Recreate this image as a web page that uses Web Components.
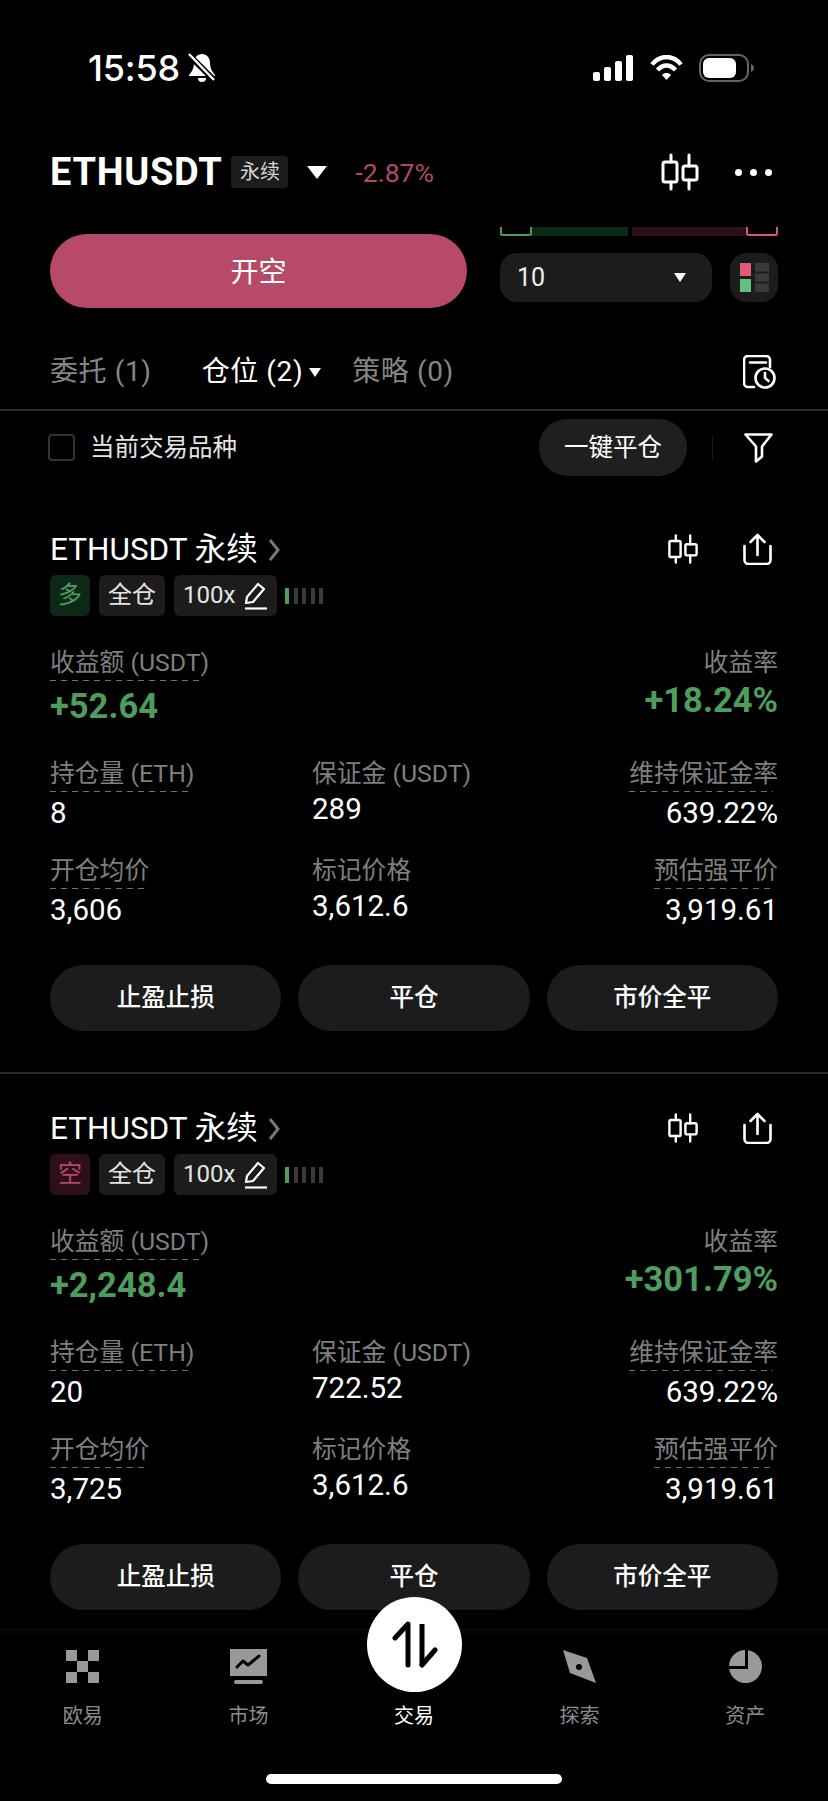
<!DOCTYPE html>
<html lang="zh">
<head>
<meta charset="utf-8">
<title>ETHUSDT</title>
<style>
  html, body { margin: 0; background: #000; }
  body {
    width: 828px;
    height: 1801px;
    overflow: hidden;
    display: flex;
    flex-direction: column;
    color: #fff;
    font-family: Roboto, "Noto Sans CJK SC", sans-serif;
  }
  .content { flex: 1; min-height: 0; overflow: hidden; }
</style>
</head>
<body>
  <status-bar></status-bar>
  <pair-header></pair-header>
  <order-strip></order-strip>
  <position-tabs></position-tabs>
  <filter-row></filter-row>
  <div class="content">
    <position-card side="long" pnl="+52.64" rate="+18.24%" size="8" margin="289" entry="3,606"></position-card>
    <position-card side="short" pnl="+2,248.4" rate="+301.79%" size="20" margin="722.52" entry="3,725"></position-card>
  </div>
  <tab-bar></tab-bar>

<script>
const candleIcon = (w, h) => `
  <svg width="${w}" height="${h}" viewBox="0 0 40 38" fill="none" stroke="currentColor" stroke-width="3" stroke-linecap="round" stroke-linejoin="round">
    <path d="M11 2v7M11 29v7M29 2v11M29 27v9"/>
    <rect x="3" y="9" width="14" height="20" rx="2"/>
    <rect x="23" y="13" width="14" height="14" rx="2"/>
  </svg>`;

const templateStatus = document.createElement("template");
templateStatus.innerHTML = `
  <style>
    :host { display: flex; height: 136px; box-sizing: border-box; padding: 0 73px 0 88px; align-items: center; justify-content: space-between; }
    .left, .right { display: flex; align-items: center; }
    .time { font: 500 36px/40px Inter, sans-serif; letter-spacing: -0.2px; }
    .left svg { margin-left: 8px; }
    .right svg + svg { margin-left: 17px; }
  </style>
  <div class="left">
    <span class="time">15:58</span>
    <svg width="28" height="30" viewBox="0 0 28 30">
      <path d="M14 1c5 0 8 4 8 9 0 5 2 9 5 12v1H1v-1c3-3 5-7 5-12 0-5 3-9 8-9z" fill="#fff"/>
      <path d="M10 25h8a4 4 0 0 1-8 0z" fill="#fff"/>
      <path d="M2 3l25 25" stroke="#000" stroke-width="6"/>
      <path d="M1 1l25 26" stroke="#fff" stroke-width="2.4"/>
    </svg>
  </div>
  <div class="right">
    <svg width="40" height="26" viewBox="0 0 40 26" fill="#fff">
      <rect x="0" y="17" width="7" height="9" rx="2"/>
      <rect x="11" y="12" width="7" height="14" rx="2"/>
      <rect x="22" y="6" width="7" height="20" rx="2"/>
      <rect x="33" y="0" width="7" height="26" rx="2"/>
    </svg>
    <svg width="33" height="26" viewBox="0 0 33 26" fill="none" stroke="#fff" stroke-width="4.4">
      <path d="M2 9.5C10-.5 23-.5 31 9.5"/>
      <path d="M7.5 15c5.500-6 12.500-6 18 0"/>
      <path d="M12 20c2.500-2.600 6.500-2.600 9 0l-4.500 5z" fill="#fff" stroke="none"/>
    </svg>
    <svg width="56" height="28" viewBox="0 0 56 28" fill="none" style="margin-left:16px">
      <rect x="1" y="1" width="48" height="26" rx="9" stroke="#666" stroke-width="2"/>
      <rect x="4" y="4" width="33" height="20" rx="6" fill="#fff"/>
      <path d="M52 10c2 1 3 2 3 4s-1 3-3 4z" fill="#666"/>
    </svg>
  </div>`;
class StatusBar extends HTMLElement {
  constructor() {
    super();
    this.attachShadow({ mode: "open" });
    this.shadowRoot.appendChild(templateStatus.content.cloneNode(true));
  }
}
customElements.define("status-bar", StatusBar);

const templateHeader = document.createElement("template");
templateHeader.innerHTML = `
  <style>
    :host { display: flex; align-items: center; height: 72px; margin-bottom: 17px; padding: 0 56px 0 50px; }
    .name { font-size: 38px; line-height: 46px; font-weight: 700; letter-spacing: 0.7px; }
    .tag { margin-left: 9px; width: 57px; height: 32px; background: #1c1c1c; border-radius: 4px; font-size: 20px; line-height: 32px; text-align: center; color: #d5d5d5; }
    .arrow { margin-left: 19px; width: 0; height: 0; border-left: 10px solid transparent; border-right: 10px solid transparent; border-top: 13px solid #fff; }
    .change { margin-left: 28px; font-size: 26.5px; color: #b04a66; }
    .icons { margin-left: auto; display: flex; align-items: center; color: #fff; }
    .dots { margin-left: 35px; display: flex; gap: 8px; }
    .dots i { width: 7px; height: 7px; border-radius: 50%; background: #fff; }
  </style>
  <span class="name">ETHUSDT</span>
  <span class="tag">永续</span>
  <span class="arrow"></span>
  <span class="change">-2.87%</span>
  <div class="icons">
    ${candleIcon(40, 38)}
    <div class="dots"><i></i><i></i><i></i></div>
  </div>`;
class PairHeader extends HTMLElement {
  constructor() {
    super();
    this.attachShadow({ mode: "open" });
    this.shadowRoot.appendChild(templateHeader.content.cloneNode(true));
  }
}
customElements.define("pair-header", PairHeader);

const templateStrip = document.createElement("template");
templateStrip.innerHTML = `
  <style>
    :host { display: grid; grid-template-columns: 417px 278px; column-gap: 33px; padding: 0 50px; }
    .sell { margin-top: 9px; height: 74px; border-radius: 37px; background: #b64a68; font-size: 28px; line-height: 77px; text-align: center; }
    .book { margin-top: 2px; display: flex; gap: 4px; height: 9px; overflow: hidden; }
    .book div { height: 9px; box-sizing: border-box; position: relative; }
    .buy-depth { width: 128px; background: #0d2a18; }
    .sell-depth { flex: 1; background: #2c0f18; }
    .box { position: absolute; top: -10px; width: 32px; height: 19px; box-sizing: border-box; border-radius: 3px; background: #000; }
    .buy-depth .box { left: 0; border: 2px solid #4c9d5e; }
    .sell-depth .box { right: 0; border: 2px solid #d8587c; }
    .controls { margin-top: 17px; display: flex; justify-content: space-between; }
    .select { width: 212px; height: 49px; box-sizing: border-box; padding: 0 26px 0 17px; background: #1c1c1c; border-radius: 17px; display: flex; align-items: center; justify-content: space-between; font-size: 25px; color: #eee; }
    .select i { width: 0; height: 0; border-left: 6.5px solid transparent; border-right: 6.5px solid transparent; border-top: 9px solid #fff; }
    .mode { width: 48px; height: 49px; background: #1c1c1c; border-radius: 16px; display: grid; place-items: center; }
  </style>
  <div class="sell">开空</div>
  <div>
    <div class="book">
      <div class="buy-depth"><span class="box"></span></div>
      <div class="sell-depth"><span class="box"></span></div>
    </div>
    <div class="controls">
      <div class="select"><span>10</span><i></i></div>
      <div class="mode">
        <svg width="29" height="29" viewBox="0 0 29 29">
          <rect x="0" y="0" width="11" height="13" fill="#e05a78"/>
          <rect x="0" y="16" width="11" height="13" fill="#63c07a"/>
          <rect x="15" y="0" width="14" height="8.500" fill="#3a3a3a"/>
          <rect x="15" y="10.500" width="14" height="8" fill="#3a3a3a"/>
          <rect x="15" y="20.500" width="14" height="8.500" fill="#3a3a3a"/>
        </svg>
      </div>
    </div>
  </div>`;
class OrderStrip extends HTMLElement {
  constructor() {
    super();
    this.attachShadow({ mode: "open" });
    this.shadowRoot.appendChild(templateStrip.content.cloneNode(true));
  }
}
customElements.define("order-strip", OrderStrip);

const templateTabs = document.createElement("template");
templateTabs.innerHTML = `
  <style>
    :host { display: flex; align-items: center; height: 48px; padding: 40px 52px 13px 50px; border-bottom: 2px solid #2d2d2d; font-size: 28px; line-height: 48px; color: #858585; letter-spacing: 0.6px; }
    .on { color: #fff; margin-left: 50px; }
    .arrow { margin-left: 6px; width: 0; height: 0; border-left: 6.500px solid transparent; border-right: 6.500px solid transparent; border-top: 9px solid #fff; }
    .last { margin-left: 31px; }
    svg { margin-left: auto; }
  </style>
  <span>委托 (1)</span>
  <span class="on">仓位 (2)</span>
  <span class="arrow"></span>
  <span class="last">策略 (0)</span>
  <svg width="33" height="34" viewBox="0 0 33 34" fill="none" stroke="#fff" stroke-width="2.600" stroke-linecap="round">
    <path d="M11 32H5a4 4 0 0 1-4-4V5a4 4 0 0 1 4-4h18a4 4 0 0 1 4 4v7"/>
    <path d="M7 7.500h16"/>
    <circle cx="22" cy="23" r="9.500"/>
    <path d="M22 18v5l3.500 3"/>
  </svg>`;
class PositionTabs extends HTMLElement {
  constructor() {
    super();
    this.attachShadow({ mode: "open" });
    this.shadowRoot.appendChild(templateTabs.content.cloneNode(true));
  }
}
customElements.define("position-tabs", PositionTabs);

const templateFilter = document.createElement("template");
templateFilter.innerHTML = `
  <style>
    :host { display: flex; align-items: center; height: 57px; padding: 8px 55px 19px 48px; font-size: 24.5px; color: #e5e5e5; }
    .check { width: 27px; height: 27px; box-sizing: border-box; border: 2px solid #333; border-radius: 4px; margin-right: 15px; }
    .text { padding-bottom: 4px; }
    .close { margin-left: auto; width: 148px; height: 57px; border-radius: 28px; background: #1f1f1f; color: #fff; text-align: center; line-height: 57px; font-size: 24.5px; }
    .sep { width: 1px; height: 24px; background: #1a1a1a; margin: 0 31px 0 25px; }
  </style>
  <span class="check"></span>
  <span class="text">当前交易品种</span>
  <span class="close">一键平仓</span>
  <span class="sep"></span>
  <svg width="29" height="30" viewBox="0 0 29 30" fill="none" stroke="#fff" stroke-width="2.600" stroke-linejoin="round">
    <path d="M1.500 1.500h26l-9.500 12v10l-6 5v-15z"/>
  </svg>`;
class FilterRow extends HTMLElement {
  constructor() {
    super();
    this.attachShadow({ mode: "open" });
    this.shadowRoot.appendChild(templateFilter.content.cloneNode(true));
  }
}
customElements.define("filter-row", FilterRow);

const templateStat = document.createElement("template");
templateStat.innerHTML = `
  <style>
    :host { display: flex; flex-direction: column; align-items: flex-start; }
    :host([end]) { align-items: flex-end; }
    .label { font-size: 24.8px; line-height: 30px; color: #7f7f7f; white-space: nowrap; }
    :host([tip]) .label {
      padding-bottom: 3px;
      background: repeating-linear-gradient(90deg, #707070 0 6px, transparent 6px 11px) left bottom / calc(100% - 5px) 1px no-repeat;
    }
    .value { margin-top: 2px; font-size: 29.5px; line-height: 36px; font-weight: 400; color: #fff; white-space: nowrap; }
    :host([tip]) .value { margin-top: 3px; }
    :host([big]) .value { margin-top: 2px; font-size: 34.5px; line-height: 40px; font-weight: 700; color: #4c9d5e; }
    :host([big][tip]) .value { margin-top: 5px; }
  </style>
  <span class="label"><slot name="label"></slot></span>
  <span class="value"><slot></slot></span>`;
class StatCell extends HTMLElement {
  constructor() {
    super();
    this.attachShadow({ mode: "open" });
    this.shadowRoot.appendChild(templateStat.content.cloneNode(true));
  }
}
customElements.define("stat-cell", StatCell);

const templatePill = document.createElement("template");
templatePill.innerHTML = `
  <style>
    :host { display: block; height: 66px; border-radius: 33px; background: #1c1c1c; font-size: 24.5px; font-weight: 500; line-height: 66px; text-align: center; color: #fff; }
  </style>
  <slot></slot>`;
class PillButton extends HTMLElement {
  constructor() {
    super();
    this.attachShadow({ mode: "open" });
    this.shadowRoot.appendChild(templatePill.content.cloneNode(true));
  }
}
customElements.define("pill-button", PillButton);

const templateCard = document.createElement("template");
templateCard.innerHTML = `
  <style>
    :host { display: block; padding: 33px 50px 41px; border-bottom: 2px solid #2a2a2a; }
    :host(:last-child) { border-bottom: 0; }
    .title { display: flex; align-items: center; height: 40px; }
    .name { font-size: 31.5px; line-height: 40px; font-weight: 400; padding-top: 4px; }
    .chev { margin: 4px 0 0 10px; }
    .tools { margin-left: auto; display: flex; align-items: center; gap: 44px; padding: 2px 6px 0 0; color: #fff; }
    .tags { margin-top: 7px; display: flex; align-items: center; gap: 9px; height: 41px; }
    .tag { height: 41px; box-sizing: border-box; border-radius: 6px; background: #1c1c1c; font-size: 24px; line-height: 41px; padding: 0 9px; color: #e5e5e5; display: flex; align-items: center; gap: 9px; }
    .side { padding: 0 8px; }
    .long { background: #0e2817; color: #4c9d5e; }
    .short { background: #2e0f19; color: #b04a66; }
    .bars { display: flex; gap: 4.500px; margin-left: -1px; }
    .bars i { width: 4px; height: 16px; background: #3a3a3a; }
    .bars i:first-child { background: #4c9d5e; }
    .stats { margin-top: 32px; display: flex; justify-content: space-between; }
    .rows { display: grid; grid-template-columns: 262px 1fr auto; row-gap: 25px; margin-top: 33px; }
    .actions { margin-top: 37px; display: grid; grid-template-columns: repeat(3, 1fr); gap: 17px; }
  </style>
  <div class="title">
    <span class="name">ETHUSDT 永续</span>
    <svg class="chev" width="12" height="22" viewBox="0 0 12 22" fill="none" stroke="#777" stroke-width="3"><path d="M2 1l8 10-8 10"/></svg>
    <div class="tools">
      ${candleIcon(32, 32)}
      <svg width="29" height="32" viewBox="0 0 29 32" fill="none" stroke="currentColor" stroke-width="2.600" stroke-linecap="round" stroke-linejoin="round">
        <path d="M1.500 13v14a4 4 0 0 0 4 4h18a4 4 0 0 0 4-4V13"/>
        <path d="M14.500 22V2M7.500 9l7-7 7 7"/>
      </svg>
    </div>
  </div>
  <div class="tags">
    <span class="tag side"></span>
    <span class="tag">全仓</span>
    <span class="tag">100x
      <svg width="24" height="28" viewBox="0 0 24 28" fill="none" stroke="#fff" stroke-width="2.200" stroke-linejoin="round">
        <path d="M2 21l1-6L14 2l6 5L9 20z"/><path d="M1 26.500h22"/>
      </svg>
    </span>
    <span class="bars"><i></i><i></i><i></i><i></i><i></i></span>
  </div>
  <div class="stats">
    <stat-cell big tip class="pnl"><span slot="label">收益额 (USDT)</span></stat-cell>
    <stat-cell big end class="rate"><span slot="label">收益率</span></stat-cell>
  </div>
  <div class="rows">
    <stat-cell tip class="size"><span slot="label">持仓量 (ETH)</span></stat-cell>
    <stat-cell class="margin"><span slot="label">保证金 (USDT)</span></stat-cell>
    <stat-cell tip end><span slot="label">维持保证金率</span>639.22%</stat-cell>
    <stat-cell tip class="entry"><span slot="label">开仓均价</span></stat-cell>
    <stat-cell><span slot="label">标记价格</span>3,612.6</stat-cell>
    <stat-cell tip end><span slot="label">预估强平价</span>3,919.61</stat-cell>
  </div>
  <div class="actions">
    <pill-button>止盈止损</pill-button>
    <pill-button>平仓</pill-button>
    <pill-button>市价全平</pill-button>
  </div>`;
class PositionCard extends HTMLElement {
  constructor() {
    super();
    this.attachShadow({ mode: "open" });
    this.shadowRoot.appendChild(templateCard.content.cloneNode(true));
  }
  connectedCallback() {
    const root = this.shadowRoot;
    const side = root.querySelector(".side");
    const isLong = this.getAttribute("side") === "long";
    side.textContent = isLong ? "多" : "空";
    side.classList.add(isLong ? "long" : "short");
    for (const key of ["pnl", "rate", "size", "margin", "entry"]) {
      root.querySelector("." + key).append(this.getAttribute(key));
    }
  }
}
customElements.define("position-card", PositionCard);

const templateNav = document.createElement("template");
templateNav.innerHTML = `
  <style>
    :host { display: flex; flex-direction: column; align-items: center; color: #8c8c8c; }
    :host([active]) { color: #fff; }
    .icon { height: 37px; display: flex; align-items: center; justify-content: center; }
    .label { margin-top: 17px; font-size: 20px; line-height: 28px; }
  </style>
  <div class="icon"><slot name="icon"></slot></div>
  <div class="label"><slot></slot></div>`;
class NavItem extends HTMLElement {
  constructor() {
    super();
    this.attachShadow({ mode: "open" });
    this.shadowRoot.appendChild(templateNav.content.cloneNode(true));
  }
}
customElements.define("nav-item", NavItem);

const templateTabBar = document.createElement("template");
templateTabBar.innerHTML = `
  <style>
    :host { display: block; position: relative; height: 173px; box-sizing: border-box; padding-top: 20px; background: linear-gradient(#0a0a0d, #000 8px); }
    .items { display: grid; grid-template-columns: repeat(5, 1fr); }
    .trade { position: absolute; left: 367px; top: -31px; width: 95px; height: 95px; border-radius: 50%; background: #fff; display: grid; place-items: center; }
    .home { margin: 44px auto 0; width: 296px; height: 10px; border-radius: 5px; background: #fff; }
  </style>
  <div class="items">
    <nav-item>
      <svg slot="icon" width="33" height="33" viewBox="0 0 33 33" fill="#999">
        <rect width="11" height="11"/><rect x="22" width="11" height="11"/>
        <rect x="11" y="11" width="11" height="11"/>
        <rect y="22" width="11" height="11"/><rect x="22" y="22" width="11" height="11"/>
      </svg>
      欧易
    </nav-item>
    <nav-item>
      <svg slot="icon" width="37" height="35" viewBox="0 0 37 35">
        <rect width="37" height="27" fill="#999"/>
        <rect x="4" y="31" width="29" height="4" rx="2" fill="#999"/>
        <path d="M7 18l6-6 5 4 11-9" fill="none" stroke="#000" stroke-width="3" stroke-linecap="round" stroke-linejoin="round"/>
      </svg>
      市场
    </nav-item>
    <nav-item active>
      <span slot="icon"></span>
      交易
    </nav-item>
    <nav-item>
      <svg slot="icon" width="33" height="33" viewBox="0 0 33 33">
        <path d="M0 0l24 8 9 25-26-10z" fill="#999"/>
        <circle cx="16" cy="17" r="3" fill="#000"/>
      </svg>
      探索
    </nav-item>
    <nav-item>
      <svg slot="icon" width="33" height="33" viewBox="0 0 33 33" fill="#999">
        <path d="M19 .2A16.500 16.500 0 1 1 .2 19H19z"/>
        <path d="M16 0A16.500 16.500 0 0 0 0 16h16z"/>
      </svg>
      资产
    </nav-item>
  </div>
  <div class="trade">
    <svg width="46" height="47" viewBox="0 0 46 47" fill="none" stroke="#000" stroke-width="5" stroke-linecap="round" stroke-linejoin="round">
      <path d="M16 44V3L3 17"/>
      <path d="M30 44V3" stroke-linecap="butt"/>
      <path d="M30 44l13-15"/>
    </svg>
  </div>
  <div class="home"></div>`;
class TabBar extends HTMLElement {
  constructor() {
    super();
    this.attachShadow({ mode: "open" });
    this.shadowRoot.appendChild(templateTabBar.content.cloneNode(true));
  }
}
customElements.define("tab-bar", TabBar);
</script>
</body>
</html>
